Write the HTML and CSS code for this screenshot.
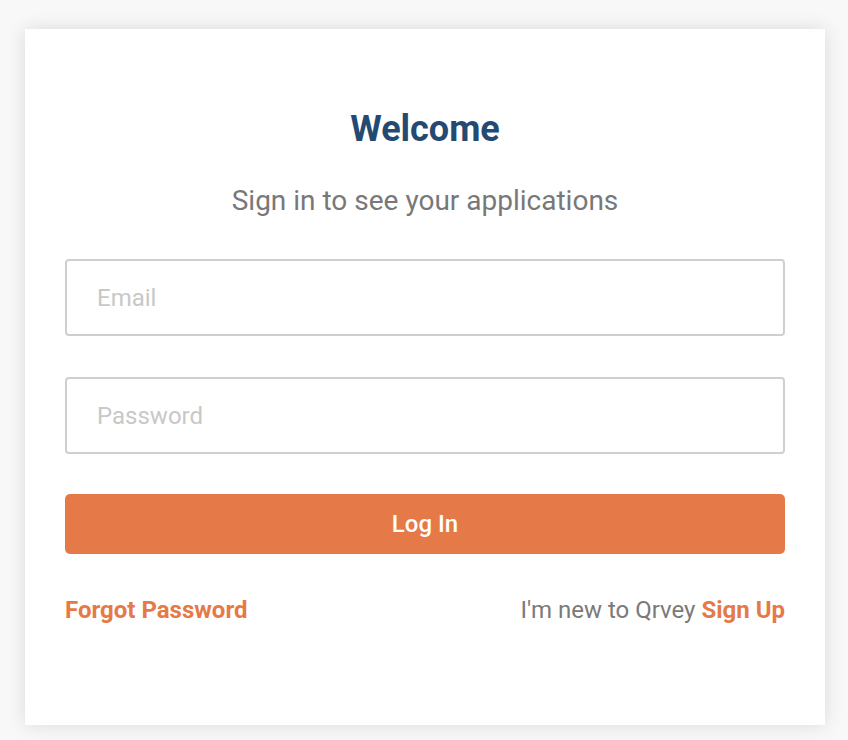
FILE: index.html
```html
<!DOCTYPE html>
<html>
<head>
<meta charset="utf-8">
<link rel="stylesheet" href="styles.css">
</head>
<body>
<div class="page">
  <div class="card">
    <h1 class="title">Welcome</h1>
    <p class="subtitle">Sign in to see your applications</p>
    <div class="field"><input class="input" type="text" placeholder="Email"></div>
    <div class="field"><input class="input" type="password" placeholder="Password"></div>
    <button class="btn">Log In</button>
    <div class="links">
      <a class="link">Forgot Password</a>
      <span class="new">I'm new to Qrvey <a class="link">Sign Up</a></span>
    </div>
  </div>
</div>
</body>
</html>
```
FILE: styles.css
```css
html, body {
  margin: 0;
  padding: 0;
  background: #f8f8f8;
  font-family: Roboto, "Liberation Sans", sans-serif;
}
.page {
  padding: 29px 23px 15px 25px;
}
.card {
  width: 800px;
  height: 696px;
  box-sizing: border-box;
  background: #fff;
  box-shadow: 0 0 18px rgba(0,0,0,0.12);
  padding: 78px 40px 0 40px;
}
.title {
  margin: 0;
  text-align: center;
  font-size: 36px;
  line-height: 44px;
  font-weight: 700;
  color: #244a72;
}
.subtitle {
  margin: 34px 0 0 0;
  text-align: center;
  font-size: 28px;
  line-height: 32px;
  color: #787878;
}
.field {
  margin-top: 42px;
}
.field + .field {
  margin-top: 41px;
}
.input {
  display: block;
  width: 100%;
  height: 77px;
  box-sizing: border-box;
  border: 2px solid #cfcfcf;
  border-radius: 4px;
  padding: 0 30px;
  font-family: Roboto, "Liberation Sans", sans-serif;
  font-size: 24px;
  color: #333;
  outline: none;
}
.input::placeholder {
  color: #c8c8c8;
}
.btn {
  display: block;
  width: 100%;
  height: 60px;
  margin-top: 40px;
  border: none;
  border-radius: 5px;
  background: #e57a48;
  color: #fff;
  font-family: Roboto, "Liberation Sans", sans-serif;
  font-size: 24px;
  font-weight: 500;
}
.links {
  display: flex;
  justify-content: space-between;
  align-items: baseline;
  margin-top: 42px;
  font-size: 24px;
  line-height: 28px;
}
.link {
  color: #e57a48;
  font-weight: 700;
}
.new {
  color: #7a7a7a;
}
```
